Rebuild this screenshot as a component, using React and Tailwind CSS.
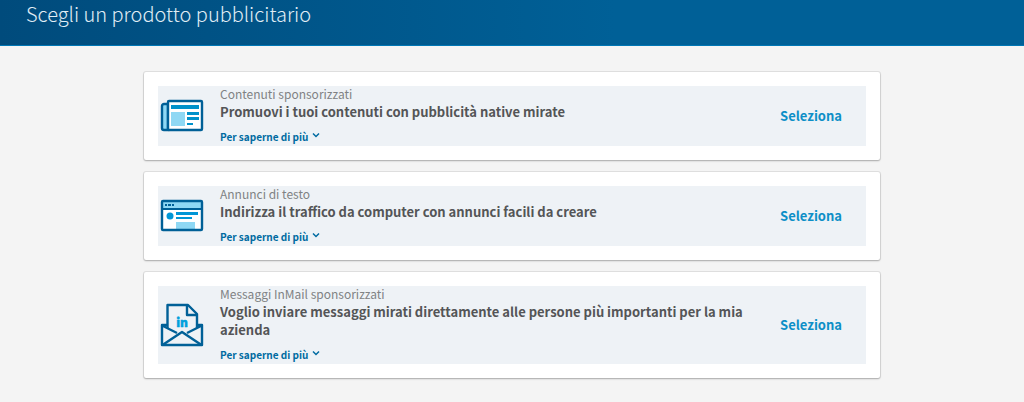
import { useId } from 'react';

function NewspaperIcon() {
  return (
    <svg className="w-12 h-12" viewBox="0 0 48 48" fill="none" aria-hidden="true">
      <path d="M10 12H6a2 2 0 0 0-2 2v22a2 2 0 0 0 2 2h4z" fill="#8fd8f4" stroke="#006097" strokeWidth={2.4} />
      <rect x="10" y="9" width="34" height="29" rx="1" fill="#fff" stroke="#006097" strokeWidth={2.4} />
      <path d="M13 13h28v4H13z" fill="#0091ca" />
      <path d="M13 20h14v14H13z" fill="#8fd8f4" />
      <path d="M29 20h12v3H29zM29 25h12v3H29zM29 31h6v2h-6z" fill="#0091ca" />
    </svg>
  );
}

function BrowserIcon() {
  return (
    <svg className="w-12 h-12" viewBox="0 0 48 48" fill="none" aria-hidden="true">
      <rect x="4" y="9" width="40" height="29" rx="1" fill="#fff" />
      <path d="M4 9h40v8H4z" fill="#8fd8f4" />
      <path d="M4 17h40" stroke="#006097" strokeWidth={2} />
      <path d="M7 12h2v2H7zM10 12h3v2h-3zM14 12h2v2h-2z" fill="#006097" />
      <circle cx="12" cy="24" r="3.5" fill="#0096d6" />
      <path d="M18 20h22v3H18zM18 25h16v2H18z" fill="#0096d6" />
      <path d="M18 30h19v8H18z" fill="#8fd8f4" />
      <rect x="4" y="9" width="40" height="29" rx="1" stroke="#006097" strokeWidth={2.4} />
    </svg>
  );
}

function InMailIcon() {
  return (
    <svg className="w-12 h-12" viewBox="0 0 48 48" fill="none" aria-hidden="true">
      <g stroke="#006097" strokeWidth={2.4} strokeLinejoin="round">
        <path d="M9.500 27V4H30l9 9v14" />
        <path d="M29 4v10h10" />
        <path d="M9 24H4v20h40V24h-5" />
        <path d="M4 24.500L19 32M44 24.500L29 32" />
        <path d="M4.500 44L24 31 43.500 44" />
      </g>
      <text
        x="24"
        y="26"
        textAnchor="middle"
        fill="#00a0dc"
        stroke="#00a0dc"
        strokeWidth={0.5}
        className="font-['Noto_Sans_CJK_SC',sans-serif] text-[12px] font-black"
      >
        in
      </text>
    </svg>
  );
}

const products = [
  {
    icon: NewspaperIcon,
    label: 'Contenuti sponsorizzati',
    title: 'Promuovi i tuoi contenuti con pubblicità native mirate',
  },
  {
    icon: BrowserIcon,
    label: 'Annunci di testo',
    title: 'Indirizza il traffico da computer con annunci facili da creare',
  },
  {
    icon: InMailIcon,
    label: 'Messaggi InMail sponsorizzati',
    title: 'Voglio inviare messaggi mirati direttamente alle persone più importanti per la mia azienda',
  },
];

function ProductCard({ icon: Icon, label, title }) {
  const titleId = useId();

  return (
    <li className="bg-white rounded-xs p-3.5 shadow-[0_0_0_1px_rgba(0,0,0,0.08),0_1px_2px_rgba(0,0,0,0.25)]">
      <div className="flex items-center bg-[#eef2f6] pr-6">
        <Icon />
        <div className="flex-1 min-w-0 ml-3.5 mr-9 pb-0.5">
          <p className="text-[12px] leading-[15px] text-[#808284]">{label}</p>
          <h2 id={titleId} className="mt-0.5 text-[13px] leading-[18px] font-bold text-[#545557]">
            {title}
          </h2>
          <button type="button" className="mt-2 flex items-center gap-1 text-[10px] leading-[15px] font-bold text-[#006ba1]">
            Per saperne di più
            <svg className="w-2 h-2 mb-1" viewBox="0 0 8 8" fill="none" stroke="currentColor" strokeWidth={1.5} aria-hidden="true">
              <path d="M1 2.500l3 3 3-3" />
            </svg>
          </button>
        </div>
        <button type="button" aria-describedby={titleId} className="text-[13px] leading-5 font-bold text-[#0d8fc7]">
          Seleziona
        </button>
      </div>
    </li>
  );
}

export default function App() {
  return (
    <div className="min-h-screen bg-[#f4f4f4] font-['Noto_Sans_CJK_SC',sans-serif]">
      <header className="bg-linear-to-r from-[#004b7c] to-[#006097] to-60% border-b border-[#0077b5] px-[26px] pb-[17px]">
        <h1 className="text-[20px] leading-7 font-light text-[#e1eef6]">Scegli un prodotto pubblicitario</h1>
      </header>

      {/* Product list */}
      <main className="px-4 py-[26px]">
        <ul className="max-w-[736px] mx-auto flex flex-col gap-3">
          {products.map((product) => (
            <ProductCard key={product.label} {...product} />
          ))}
        </ul>
      </main>
    </div>
  );
}
